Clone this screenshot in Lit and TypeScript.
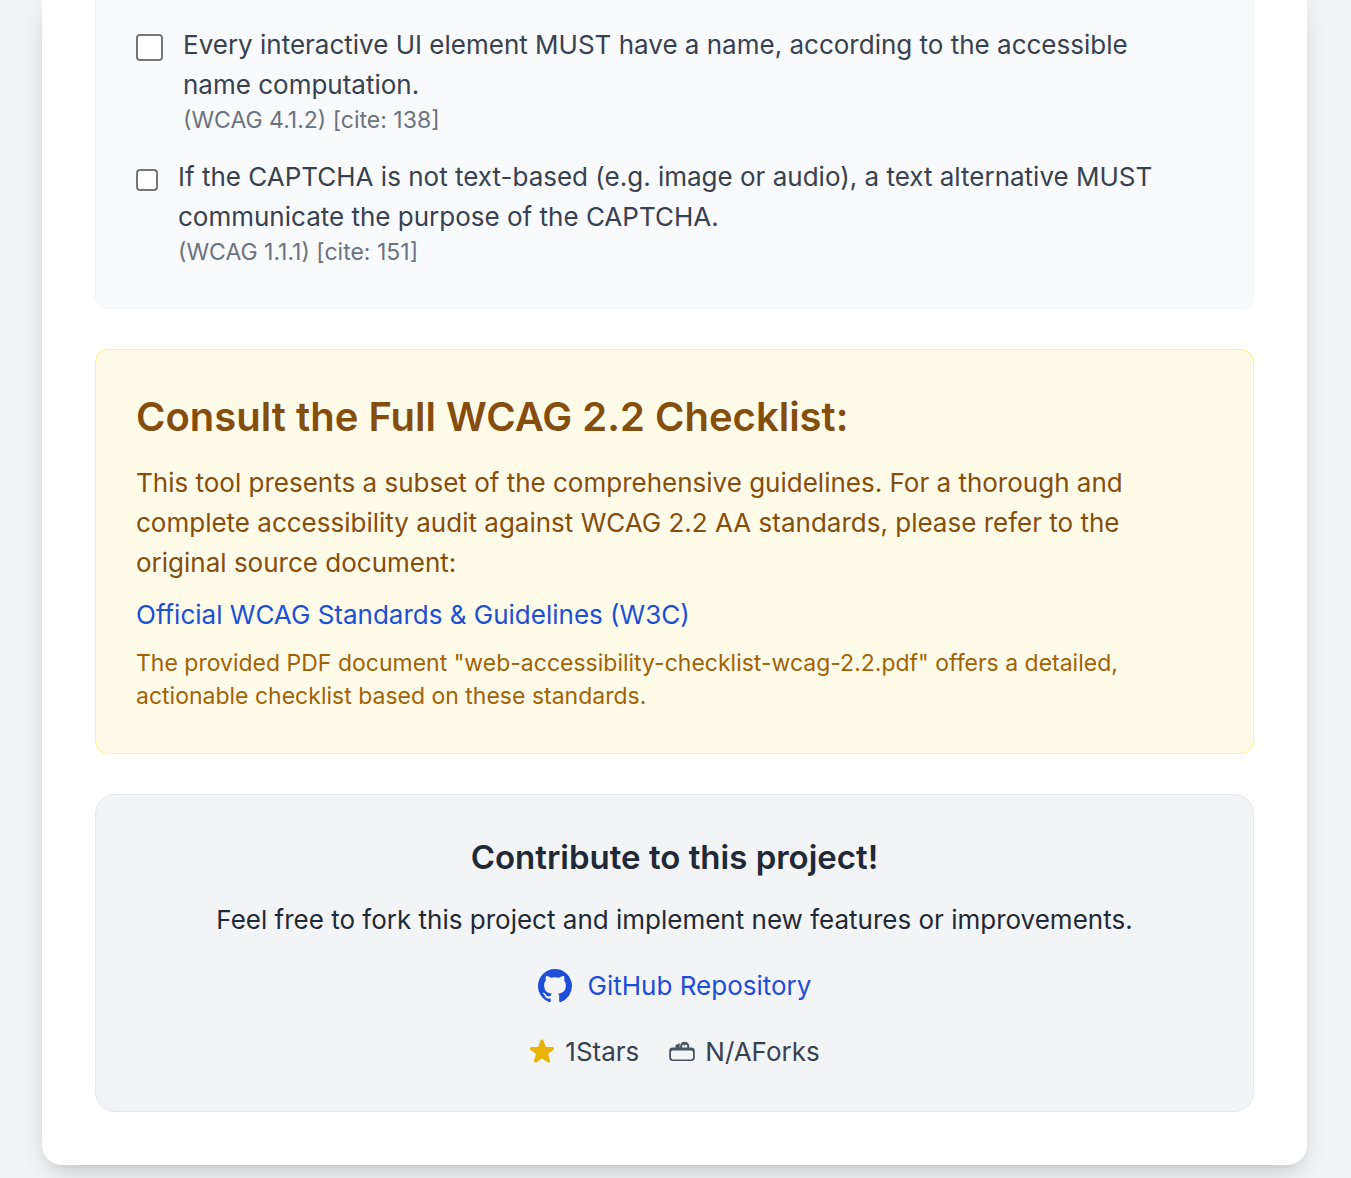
import { LitElement, html, css } from "lit";
import { customElement, property } from "lit/decorators.js";

@customElement("check-item")
class CheckItem extends LitElement {
  @property() name = "";
  @property() label = "";
  @property() cite = "";
  @property({ type: Boolean, reflect: true }) compact = false;

  static styles = css`
    :host {
      display: flex;
      align-items: flex-start;
      gap: 20px;
      padding-right: 20px;
    }
    .box {
      appearance: none;
      box-sizing: border-box;
      flex: none;
      width: 27px;
      height: 27px;
      margin: 9px 0 0;
      border: 2px solid #767676;
      border-radius: 4px;
      background: #fff;
    }
    :host([compact]) .box {
      width: 22px;
      height: 22px;
      margin-top: 12px;
    }
    .box:checked {
      border-color: #2563eb;
      background: #2563eb;
      box-shadow: inset 0 0 0 3px #fff;
    }
    .label {
      color: #374151;
      font-size: 26px;
      line-height: 40px;
    }
    .cite {
      display: block;
      color: #6b7280;
      font-size: 23px;
      line-height: 31px;
    }
  `;

  render() {
    return html`
      <input class="box" type="checkbox" id=${this.name} />
      <label class="label" for=${this.name}>
        ${this.label}
        <span class="cite">${this.cite}</span>
      </label>
    `;
  }
}

@customElement("app-root")
class AppRoot extends LitElement {
  static styles = css`
    :host {
      display: block;
      box-sizing: border-box;
      min-height: 100vh;
      padding: 0 44px 12px 42px;
      overflow: hidden;
      background: #f3f4f6;
      color: #1f2937;
      font-family: Inter, "Liberation Sans", sans-serif;
      font-size: 26px;
      line-height: 40px;
    }
    h2,
    h3,
    p {
      margin: 0;
    }
    a {
      color: #1d4ed8;
      text-decoration: none;
    }
    a:hover {
      text-decoration: underline;
    }
    .card {
      display: flex;
      flex-direction: column;
      gap: 40px;
      padding: 0 53px 53px;
      border-radius: 0 0 20px 20px;
      background: #fff;
      box-shadow:
        0 16px 25px -5px rgb(0 0 0 / 0.1),
        0 7px 10px -7px rgb(0 0 0 / 0.1),
        0 0 26px rgb(0 0 0 / 0.06);
    }
    .panel {
      padding: 40px;
      border: 1px solid;
      border-radius: 13px;
    }
    .checks {
      display: flex;
      flex-direction: column;
      gap: 21px;
      padding-top: 25px;
      border-color: #f3f4f6;
      border-top: 0;
      border-radius: 0 0 13px 13px;
      background: #f9fafb;
    }
    .notice {
      border-color: #fef08a;
      background: #fefce8;
      color: #854d0e;
    }
    .notice-title {
      margin-bottom: 20px;
      font-size: 40px;
      font-weight: 600;
      line-height: 53px;
    }
    .notice-link {
      margin: 12px 0;
    }
    .notice-note {
      color: #a16207;
      font-size: 23px;
      line-height: 33px;
    }
    .contribute {
      display: flex;
      flex-direction: column;
      align-items: center;
      gap: 26px;
      padding-bottom: 39px;
      border-color: #e5e7eb;
      border-radius: 20px;
      background: #f3f4f6;
      text-align: center;
    }
    .contribute-title {
      margin-bottom: 20px;
      font-size: 33px;
      font-weight: 600;
      line-height: 45px;
    }
    .repo {
      display: flex;
      align-items: center;
      gap: 16px;
    }
    .repo-icon {
      width: 34px;
      height: 34px;
      fill: currentColor;
    }
    .stats {
      display: flex;
      gap: 30px;
      color: #374151;
    }
    .stat {
      display: flex;
      align-items: center;
      gap: 10px;
    }
    .stat-icon {
      width: 26px;
      height: 26px;
    }
    .star {
      fill: #eab308;
    }
    .forks {
      fill: #4b5563;
    }
  `;

  render() {
    return html`
      <main class="card">
        <section class="panel checks">
          <check-item
            name="ui-name"
            label="Every interactive UI element MUST have a name, according to the accessible name computation."
            cite="(WCAG 4.1.2) [cite: 138]"
          ></check-item>
          <check-item
            compact
            name="captcha-purpose"
            label="If the CAPTCHA is not text-based (e.g. image or audio), a text alternative MUST communicate the purpose of the CAPTCHA."
            cite="(WCAG 1.1.1) [cite: 151]"
          ></check-item>
        </section>

        <section class="panel notice">
          <h2 class="notice-title">Consult the Full WCAG 2.2 Checklist:</h2>
          <p>
            This tool presents a subset of the comprehensive guidelines. For a thorough and complete
            accessibility audit against WCAG 2.2 AA standards, please refer to the original source
            document:
          </p>
          <p class="notice-link">
            <a href="https://www.w3.org/WAI/standards-guidelines/wcag/">Official WCAG Standards &amp; Guidelines (W3C)</a>
          </p>
          <p class="notice-note">
            The provided PDF document "web-accessibility-checklist-wcag-2.2.pdf" offers a detailed,
            actionable checklist based on these standards.
          </p>
        </section>

        <section class="panel contribute">
          <div>
            <h3 class="contribute-title">Contribute to this project!</h3>
            <p>Feel free to fork this project and implement new features or improvements.</p>
          </div>
          <a class="repo" href="https://github.com/">
            <svg class="repo-icon" viewBox="2 2 20 20" aria-hidden="true">
              <path
                fill-rule="evenodd"
                d="M12 2C6.477 2 2 6.484 2 12.017c0 4.425 2.865 8.18 6.839 9.504.5.092.682-.217.682-.483 0-.237-.008-.868-.013-1.703-2.782.605-3.369-1.343-3.369-1.343-.454-1.158-1.11-1.466-1.11-1.466-.908-.62.069-.608.069-.608 1.003.07 1.531 1.032 1.531 1.032.892 1.53 2.341 1.088 2.91.832.092-.647.35-1.088.636-1.338-2.22-.253-4.555-1.113-4.555-4.951 0-1.093.39-1.988 1.029-2.688-.103-.253-.446-1.272.098-2.65 0 0 .84-.27 2.75 1.026A9.564 9.564 0 0112 6.844c.85.004 1.705.115 2.504.337 1.909-1.296 2.747-1.027 2.747-1.027.546 1.379.202 2.398.1 2.651.64.7 1.028 1.595 1.028 2.688 0 3.848-2.339 4.695-4.566 4.943.359.309.678.92.678 1.855 0 1.338-.012 2.419-.012 2.747 0 .268.18.58.688.482A10.019 10.019 0 0022 12.017C22 6.484 17.522 2 12 2z"
              />
            </svg>
            GitHub Repository
          </a>
          <div class="stats">
            <span class="stat">
              <svg class="stat-icon star" viewBox="2 2 16 16" aria-hidden="true">
                <path
                  d="M9.049 2.927c.3-.921 1.603-.921 1.902 0l1.07 3.292a1 1 0 00.95.69h3.462c.969 0 1.371 1.24.588 1.81l-2.8 2.034a1 1 0 00-.364 1.118l1.07 3.292c.3.921-.755 1.688-1.54 1.118l-2.8-2.034a1 1 0 00-1.175 0l-2.8 2.034c-.784.57-1.838-.197-1.539-1.118l1.07-3.292a1 1 0 00-.364-1.118L2.98 8.72c-.783-.57-.38-1.81.588-1.81h3.461a1 1 0 00.951-.69l1.07-3.292z"
                />
              </svg>
              1Stars
            </span>
            <span class="stat">
              <svg class="stat-icon forks" viewBox="0 0 26 26" aria-hidden="true">
                <path
                  fill-rule="evenodd"
                  d="M3.6 8.6h18.8a3.4 3.4 0 013.4 3.4v6.6a3.4 3.4 0 01-3.4 3.4H3.6a3.4 3.4 0 01-3.4-3.4V12a3.4 3.4 0 013.4-3.4zM3.8 11.6a1.8 1.8 0 00-1.8 1.8v5.2a1.8 1.8 0 001.8 1.8h18.4a1.8 1.8 0 001.8-1.8v-5.2a1.8 1.8 0 00-1.8-1.8z"
                />
                <path d="M6.4 9V7.4c0-1.5.9-2.2 2.3-2.2l2-1.2v5zM11.2 9V6.6c0-2.4 1.9-3.8 4.4-3.8 2.8 0 4.6 1.6 4.6 4.2V9h-2V7.2c0-1-.8-1.6-1.8-1.4l-1.6 1.4V5.4c-1 .2-1.6.8-1.6 1.8V9z" />
              </svg>
              N/AForks
            </span>
          </div>
        </section>
      </main>
    `;
  }
}
